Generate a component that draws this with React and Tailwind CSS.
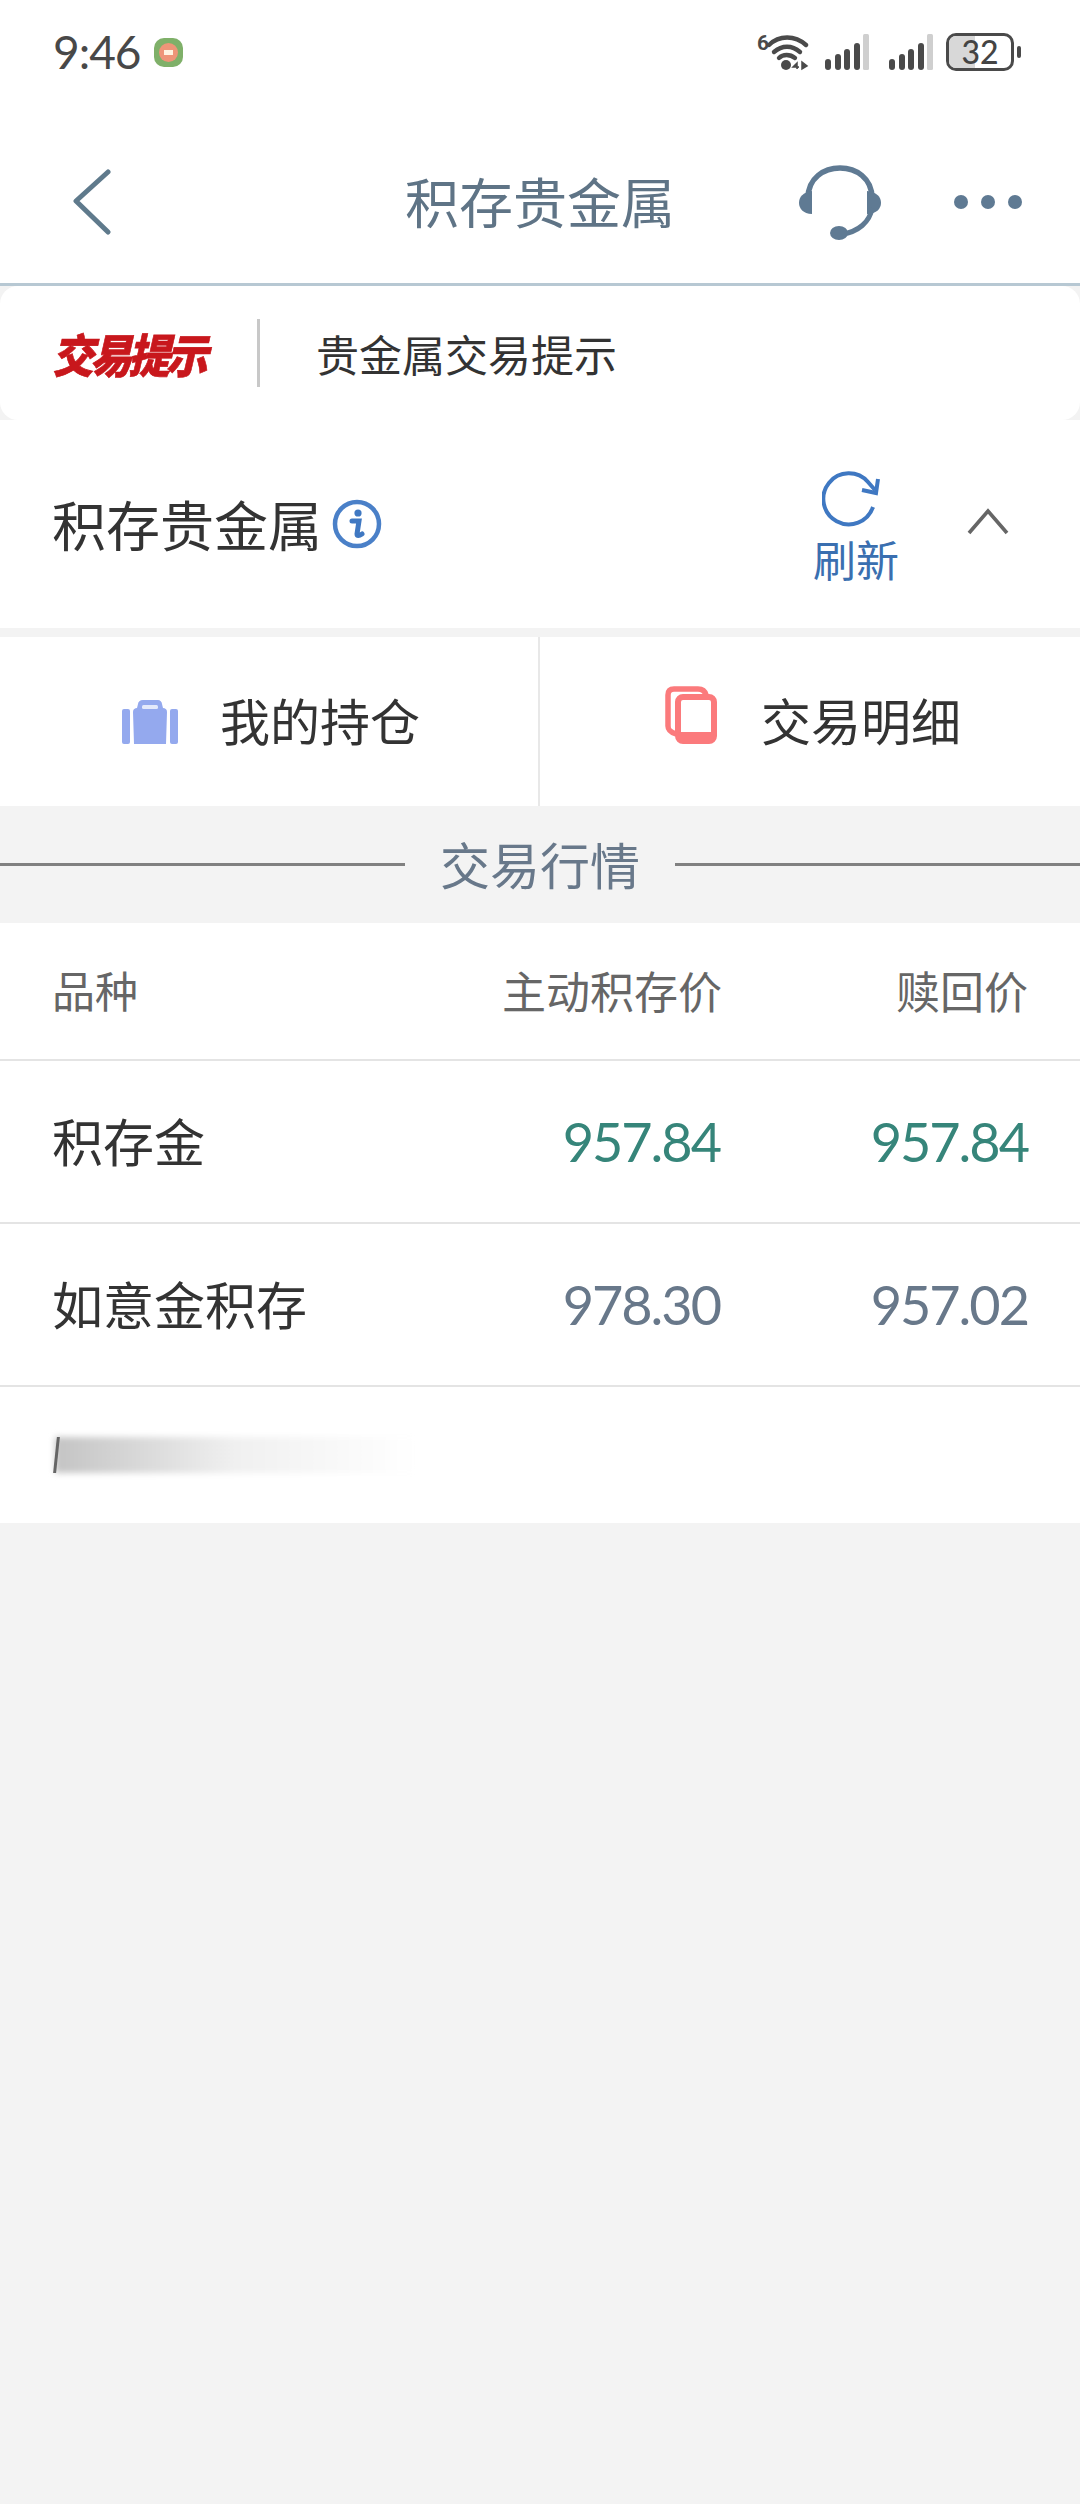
import React from "react";

const Wifi = () => (
  <div className="relative w-[52px] h-[38px]">
    <span className="absolute left-0 top-0 font-['Roboto',sans-serif] font-bold text-[21px] leading-[20px] text-[#4a4a4a]">6</span>
    <svg width="52" height="38" viewBox="0 0 52 38" fill="none" className="block">
      <path d="M12 12 C22 2, 38 2, 49 12" stroke="#4a4a4a" strokeWidth="4.4" strokeLinecap="round" />
      <path d="M17 19 C25 12, 35 12, 43 19" stroke="#4a4a4a" strokeWidth="4.4" strokeLinecap="round" />
      <path d="M22 25 C26 21, 33 21, 38 25" stroke="#4a4a4a" strokeWidth="4.4" strokeLinecap="round" />
      <circle cx="29" cy="32" r="5" fill="#4a4a4a" />
      <path d="M40 36 L40 30 L36 34 L42 34 M45 29 L45 36 L50 33 Z" stroke="#4a4a4a" strokeWidth="1.5" fill="#4a4a4a" />
    </svg>
  </div>
);

const Signal = () => (
  <svg width="44" height="36" viewBox="0 0 44 36" className="block">
    <rect x="0" y="25" width="6" height="11" rx="3" fill="#4a4a4a" />
    <rect x="10" y="20" width="6" height="16" rx="3" fill="#4a4a4a" />
    <rect x="19" y="15" width="6" height="21" rx="3" fill="#4a4a4a" />
    <rect x="29" y="9" width="6" height="27" rx="3" fill="#4a4a4a" />
    <rect x="38" y="0" width="6" height="36" rx="1.5" fill="#cfcfcf" />
  </svg>
);

const Headset = () => (
  <svg width="84" height="80" viewBox="0 0 84 80" className="block">
    <path d="M10 36 C10 -4, 74 -4, 74 36" fill="none" stroke="#5f7a93" strokeWidth="5.5" />
    <path d="M14 29 L14 52 C5 52 1 46 1 41 C1 35 5 30 14 29 Z" fill="#5f7a93" />
    <path d="M69 29 L69 52 C79 52 83 46 83 41 C83 35 79 30 69 29 Z" fill="#5f7a93" />
    <path d="M74 46 C72 60 60 70 44 72" fill="none" stroke="#5f7a93" strokeWidth="5" />
    <ellipse cx="41" cy="71" rx="9" ry="7" fill="#5f7a93" />
  </svg>
);

const Bag = () => (
  <svg width="56" height="44" viewBox="0 0 56 44" className="block">
    <rect x="0" y="9" width="8" height="35" rx="2" fill="#94a9ee" />
    <rect x="48" y="9" width="8" height="35" rx="2" fill="#94a9ee" />
    <path d="M11 12 C11 9 13 8 15 8 L16 4 C16 2 18 0 21 0 L36 0 C38 0 40 2 40 4 L41 8 C43 8 45 9 45 12 L44 44 L12 44 Z" fill="#94a9ee" />
    <rect x="20" y="5" width="16" height="4" rx="1.5" fill="#ffffff" opacity="0.75" />
  </svg>
);

const Copy = () => (
  <svg width="52" height="58" viewBox="0 0 52 58" fill="none" className="block">
    <path d="M11 48 C5 46 3 44 3 40 V9 C3 5 5 3 9 3 H33 C37 3 40 5 41 9" stroke="#fb7a7c" strokeWidth="5.5" />
    <rect x="13" y="11" width="36" height="44" rx="5" stroke="#fb7a7c" strokeWidth="6" />
    <rect x="13" y="46" width="36" height="9" rx="3" fill="#fb7a7c" />
  </svg>
);

const Row = ({ name, a, b, color }) => (
  <div className="grid grid-cols-[1fr_218px_308px] items-center h-[163px] px-[52px] border-b-2 border-[#e4e4e4] bg-white">
    <div className="pb-[2px] text-[51px] leading-none text-[#333333]">{name}</div>
    <div className={`text-right font-['Lato',sans-serif] text-[54px] leading-none tracking-[-2px] ${color}`}>{a}</div>
    <div className={`text-right font-['Lato',sans-serif] text-[54px] leading-none tracking-[-2px] ${color}`}>{b}</div>
  </div>
);

export default function App() {
  return (
    <div className="min-h-[2504px] w-[1080px] bg-[#f3f3f3] font-['Noto_Sans_CJK_SC',sans-serif]">
      <div className="bg-white">
        <div className="flex items-center h-[104px] pl-[53px] pr-[59px]">
          <span className="font-['Lato',sans-serif] text-[46px] leading-none tracking-[-1px] text-[#484848]">9:46</span>
          <span className="ml-[13px] flex items-center justify-center w-[29px] h-[29px] rounded-[10px] bg-[#7fb069]">
            <span className="flex items-center justify-center w-[19px] h-[19px] rounded-full bg-[#ee9578]">
              <span className="w-[9px] h-[5px] bg-[#fff3e0]" />
            </span>
          </span>
          <div className="ml-auto flex items-center">
            <Wifi />
            <div className="ml-[16px]"><Signal /></div>
            <div className="ml-[20px]"><Signal /></div>
            <div className="relative ml-[13px] flex items-center justify-center w-[68px] h-[38px] rounded-[10px] border-[3px] border-[#4a4a4a]">
              <div className="absolute left-0 top-0 bottom-0 w-[26px] rounded-l-[7px] bg-[#d8d8d8]" />
              <span className="relative font-['Lato',sans-serif] font-medium text-[32px] leading-[32px] text-[#444444]">32</span>
            </div>
            <div className="ml-[3px] w-[4px] h-[12px] rounded-[2px] bg-[#4a4a4a]" />
          </div>
        </div>
        <div className="relative flex items-center justify-center h-[182px] border-b-[3px] border-[#b7c8d3] pt-[14px]">
          <span className="text-[54px] leading-none text-[#5f7486]">积存贵金属</span>
          <svg width="38" height="66" viewBox="0 0 38 66" fill="none" className="absolute left-[73px] top-[65px]">
            <path d="M35 3 L3 32 L35 63" stroke="#5f7a8c" strokeWidth="5" strokeLinecap="round" strokeLinejoin="round" />
          </svg>
          <div className="absolute left-[798px] top-[58px]"><Headset /></div>
          <div className="absolute left-[954px] top-[91px] flex gap-[13px]">
            <span className="w-[14px] h-[14px] rounded-full bg-[#5f7a93]" />
            <span className="w-[14px] h-[14px] rounded-full bg-[#5f7a93]" />
            <span className="w-[14px] h-[14px] rounded-full bg-[#5f7a93]" />
          </div>
        </div>
      </div>

      <div className="flex items-center h-[134px] pl-[52px] bg-white rounded-[18px]">
        <span className="w-[156px] origin-left scale-y-110 text-[42px] leading-none font-black italic tracking-[-4px] text-[#c8171c] whitespace-nowrap [-webkit-text-stroke:0.6px_#c8171c]">交易提示</span>
        <span className="ml-[49px] w-[3px] h-[68px] bg-[#c8c8c8]" />
        <span className="ml-[56px] text-[43px] leading-none text-[#333333]">贵金属交易提示</span>
      </div>

      <div className="flex items-center h-[208px] pl-[52px] bg-white">
        <span className="text-[54px] leading-none text-[#333333]">积存贵金属</span>
        <svg width="50" height="50" viewBox="0 0 50 50" fill="none" className="ml-[10px]">
          <circle cx="25" cy="25" r="22" stroke="#4a80c8" strokeWidth="4.5" />
          <circle cx="26" cy="14" r="3.6" fill="#3f78c2" />
          <path d="M20 22 H27 L25 35 C25 37 27 37 30 35" stroke="#3f78c2" strokeWidth="5" strokeLinecap="round" />
        </svg>
        <div className="ml-[431px] flex flex-col items-center w-[86px] mt-[2px]">
          <svg width="60" height="58" viewBox="0 0 60 58" fill="none" className="block -translate-x-[4px]">
            <path d="M51 36 A25.5 25.5 0 1 1 46 11 L53 19" stroke="#3f78c2" strokeWidth="4" />
            <path d="M56 8 L54 22 L40 19" stroke="#3f78c2" strokeWidth="4" />
          </svg>
          <span className="mt-[8px] text-[43px] leading-none text-[#3a6fb0] whitespace-nowrap">刷新</span>
        </div>
        <svg width="42" height="28" viewBox="0 0 42 28" fill="none" className="ml-[68px] mt-[-4px]">
          <path d="M2 25 L21 3 L40 25" stroke="#666666" strokeWidth="3.6" />
        </svg>
      </div>

      <div className="mt-[9px] grid grid-cols-2 h-[169px] bg-white">
        <div className="flex items-center pl-[122px] gap-[42px] border-r-2 border-[#e8e8e8]">
          <Bag />
          <span className="pb-[6px] text-[50px] leading-none text-[#333333]">我的持仓</span>
        </div>
        <div className="flex items-center pl-[125px] gap-[44px]">
          <div className="mt-[-14px]"><Copy /></div>
          <span className="pb-[6px] text-[50px] leading-none text-[#333333]">交易明细</span>
        </div>
      </div>

      <div className="flex items-center h-[117px]">
        <div className="h-[3px] w-[405px] bg-[#808080]" />
        <span className="flex-1 pb-[4px] text-center text-[50px] leading-none text-[#68788a]">交易行情</span>
        <div className="h-[3px] w-[405px] bg-[#808080]" />
      </div>

      <div className="bg-white">
        <div className="grid grid-cols-[1fr_218px_308px] items-center h-[138px] px-[52px] border-b-2 border-[#e4e4e4] text-[#666666]">
          <div className="pb-[3px] text-[43px] leading-none">品种</div>
          <div className="pb-[3px] text-right text-[44px] leading-none whitespace-nowrap">主动积存价</div>
          <div className="pb-[3px] text-right text-[44px] leading-none">赎回价</div>
        </div>
        <Row name="积存金" a="957.84" b="957.84" color="text-[#36857a]" />
        <Row name="如意金积存" a="978.30" b="957.02" color="text-[#68788a]" />
        <div className="flex items-center h-[136px] pl-[55px]">
          <div className="relative w-[360px] h-[36px]">
            <div className="absolute inset-0 bg-gradient-to-r from-[#c4c4c4] via-[#f0f0f0] to-white blur-[3px]" />
            <div className="absolute left-0 top-0 bottom-0 w-[3px] bg-[#666666] skew-x-[-6deg]" />
          </div>
        </div>
      </div>
    </div>
  );
}
